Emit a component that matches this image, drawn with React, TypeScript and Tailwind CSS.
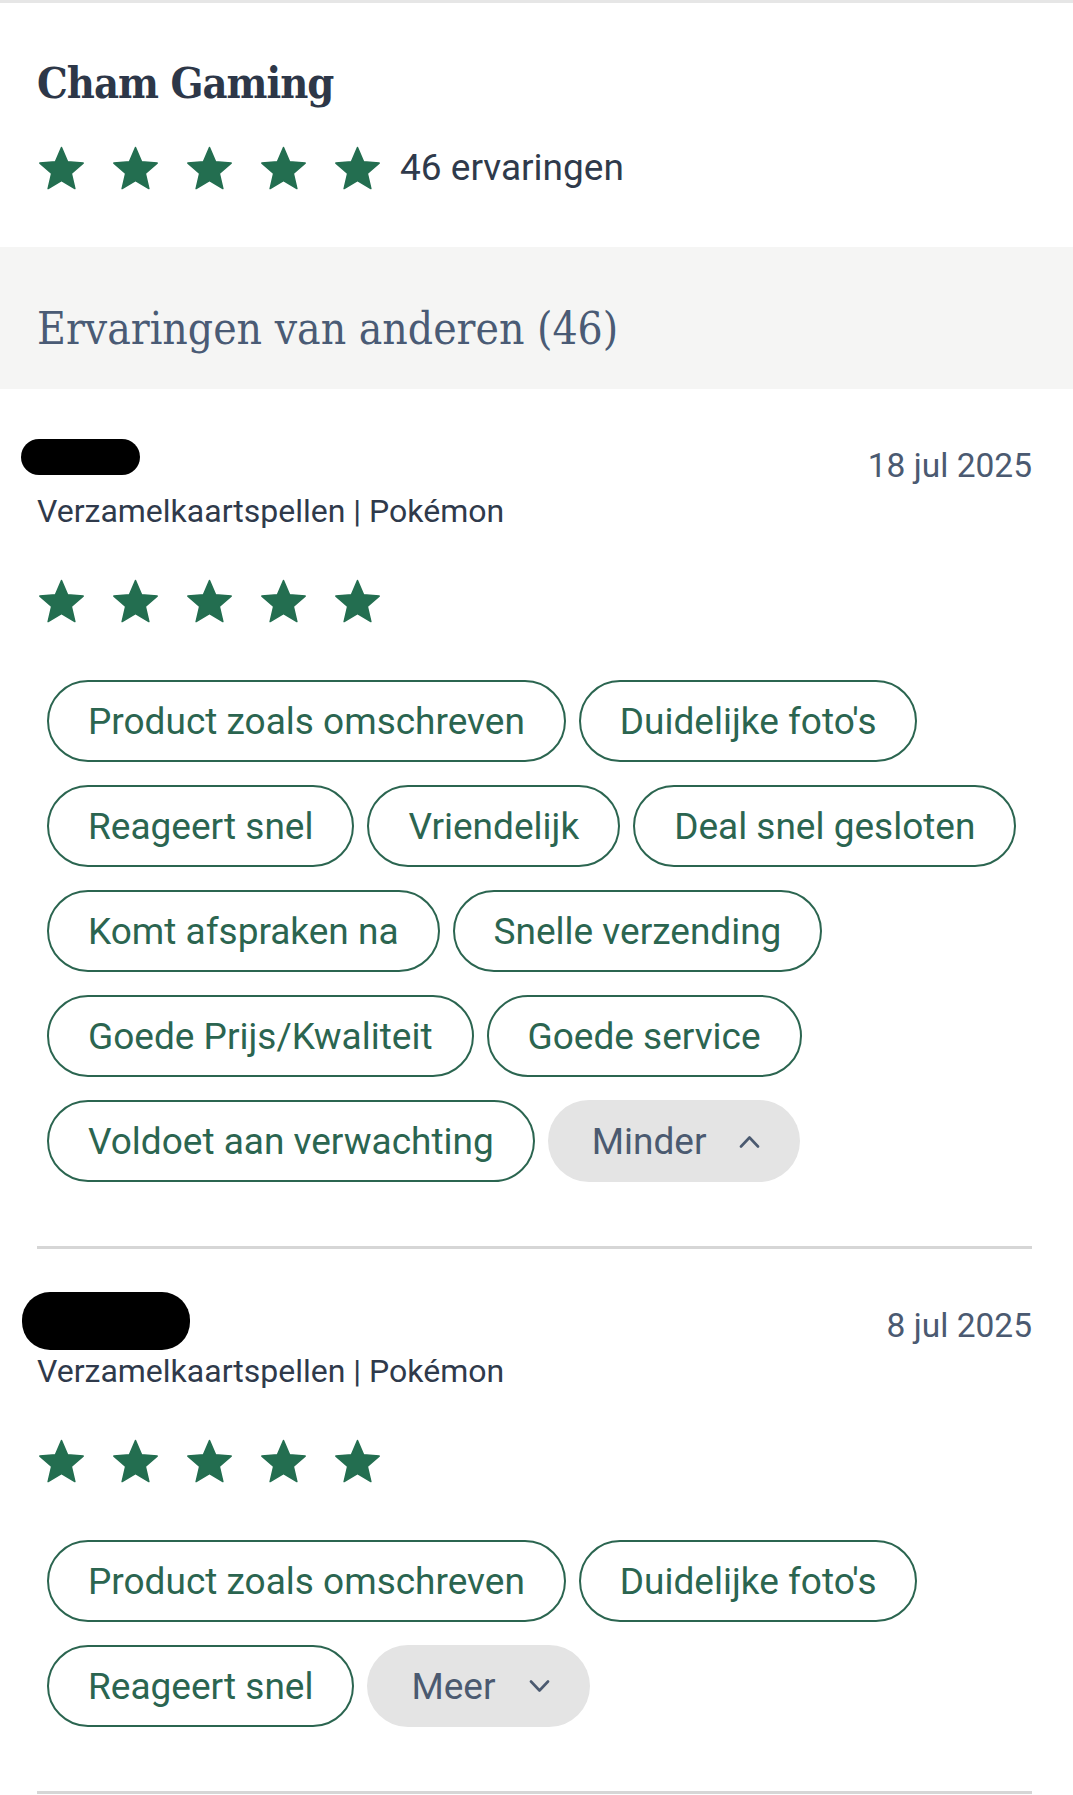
import React from "react";

const GREEN = "#236e50";

function Star() {
  return (
    <svg width="45" height="44" viewBox="1.6 1.6 20.8 19.8" aria-hidden="true">
      <path
        d="M12 17.27L18.18 21l-1.64-7.03L22 9.24l-7.19-.61L12 2 9.19 8.63 2 9.24l5.46 4.73L5.82 21z"
        fill={GREEN}
        stroke={GREEN}
        strokeWidth="0.7"
        strokeLinejoin="round"
      />
    </svg>
  );
}

function Stars() {
  return (
    <div className="flex items-center gap-[29px] ml-[2px] h-[45px]">
      <Star />
      <Star />
      <Star />
      <Star />
      <Star />
    </div>
  );
}

function Chip({ label }: { label: string }) {
  return (
    <span className="flex h-[82px] items-center rounded-full border-[2.5px] border-[#2b6550] px-[39px] text-[37px] leading-none text-[#2b6550] whitespace-nowrap">
      {label}
    </span>
  );
}

function Toggle({ label, up }: { label: string; up: boolean }) {
  return (
    <span className="flex h-[82px] items-center gap-[33px] rounded-full bg-[#e4e4e4] pl-[44px] pr-[40px] text-[37px] leading-none text-[#4b5a70] whitespace-nowrap">
      {label}
      <svg width="21" height="13" viewBox="0 0 21 13" fill="none" aria-hidden="true">
        {up ? (
          <path d="M2 11.5 L10.5 2.5 L19 11.5" stroke="#4b5a70" strokeWidth="2.6" strokeLinecap="round" strokeLinejoin="round" />
        ) : (
          <path d="M2 1.5 L10.5 10.5 L19 1.5" stroke="#4b5a70" strokeWidth="2.6" strokeLinecap="round" strokeLinejoin="round" />
        )}
      </svg>
    </span>
  );
}

type ReviewProps = {
  date: string;
  blob: "small" | "large";
  rows: string[][];
  toggle: { label: string; up: boolean };
};

function Review({ date, blob, rows, toggle }: ReviewProps) {
  return (
    <section className="pl-[37px] pr-[41px] pt-[57px]">
      <div className="flex h-[40px] items-start justify-between">
        {blob === "small" ? (
          <div className="-ml-[16px] -mt-[7px] h-[36px] w-[119px] rounded-[18px] bg-black" />
        ) : (
          <div className="-ml-[15px] -mt-[14px] h-[58px] w-[168px] rounded-[28px] bg-black" />
        )}
        <span className="text-[33.5px] leading-[40px] text-[#4b5a71]">{date}</span>
      </div>
      <p className="mt-[7px] text-[32px] leading-[36px] text-[#2f3a4b]">Verzamelkaartspellen | Pokémon</p>
      <div className="mt-[49px]">
        <Stars />
      </div>
      <div className="mt-[57px] ml-[10px] flex flex-col gap-[23px]">
        {rows.map((row, i) => (
          <div key={i} className="flex gap-[13px]">
            {row.map((c) => (
              <Chip key={c} label={c} />
            ))}
            {i === rows.length - 1 && <Toggle label={toggle.label} up={toggle.up} />}
          </div>
        ))}
      </div>
      <div className="mt-[64px] h-[3px] bg-[#d6d6d6]" />
    </section>
  );
}

export default function App() {
  return (
    <div className="w-[1073px] bg-white" style={{ fontFamily: "Roboto, 'Noto Sans', sans-serif" }}>
      <div className="h-[3px] bg-[#e6e6e6]" />
      <header className="pl-[37px] pt-[56px] pb-[57px]">
        <h1
          className="text-[43px] leading-[48px] font-bold tracking-[-1px] text-[#2d3748]"
          style={{ fontFamily: "'DejaVu Serif Condensed', 'DejaVu Serif', serif" }}
        >
          Cham Gaming
        </h1>
        <div className="mt-[38px] flex items-center gap-[20px]">
          <Stars />
          <span className="text-[37px] leading-none text-[#2f3a4b]">46 ervaringen</span>
        </div>
      </header>
      <div className="h-[142px] bg-[#f5f5f4] pl-[37px] pt-[58px]">
        <h2
          className="text-[44px] leading-[48px] text-[#4a5b75]"
          style={{ fontFamily: "'DejaVu Serif Condensed', 'DejaVu Serif', serif" }}
        >
          Ervaringen van anderen (46)
        </h2>
      </div>
      <Review
        date="18 jul 2025"
        blob="small"
        rows={[
          ["Product zoals omschreven", "Duidelijke foto's"],
          ["Reageert snel", "Vriendelijk", "Deal snel gesloten"],
          ["Komt afspraken na", "Snelle verzending"],
          ["Goede Prijs/Kwaliteit", "Goede service"],
          ["Voldoet aan verwachting"],
        ]}
        toggle={{ label: "Minder", up: true }}
      />
      <Review
        date="8 jul 2025"
        blob="large"
        rows={[
          ["Product zoals omschreven", "Duidelijke foto's"],
          ["Reageert snel"],
        ]}
        toggle={{ label: "Meer", up: false }}
      />
    </div>
  );
}
